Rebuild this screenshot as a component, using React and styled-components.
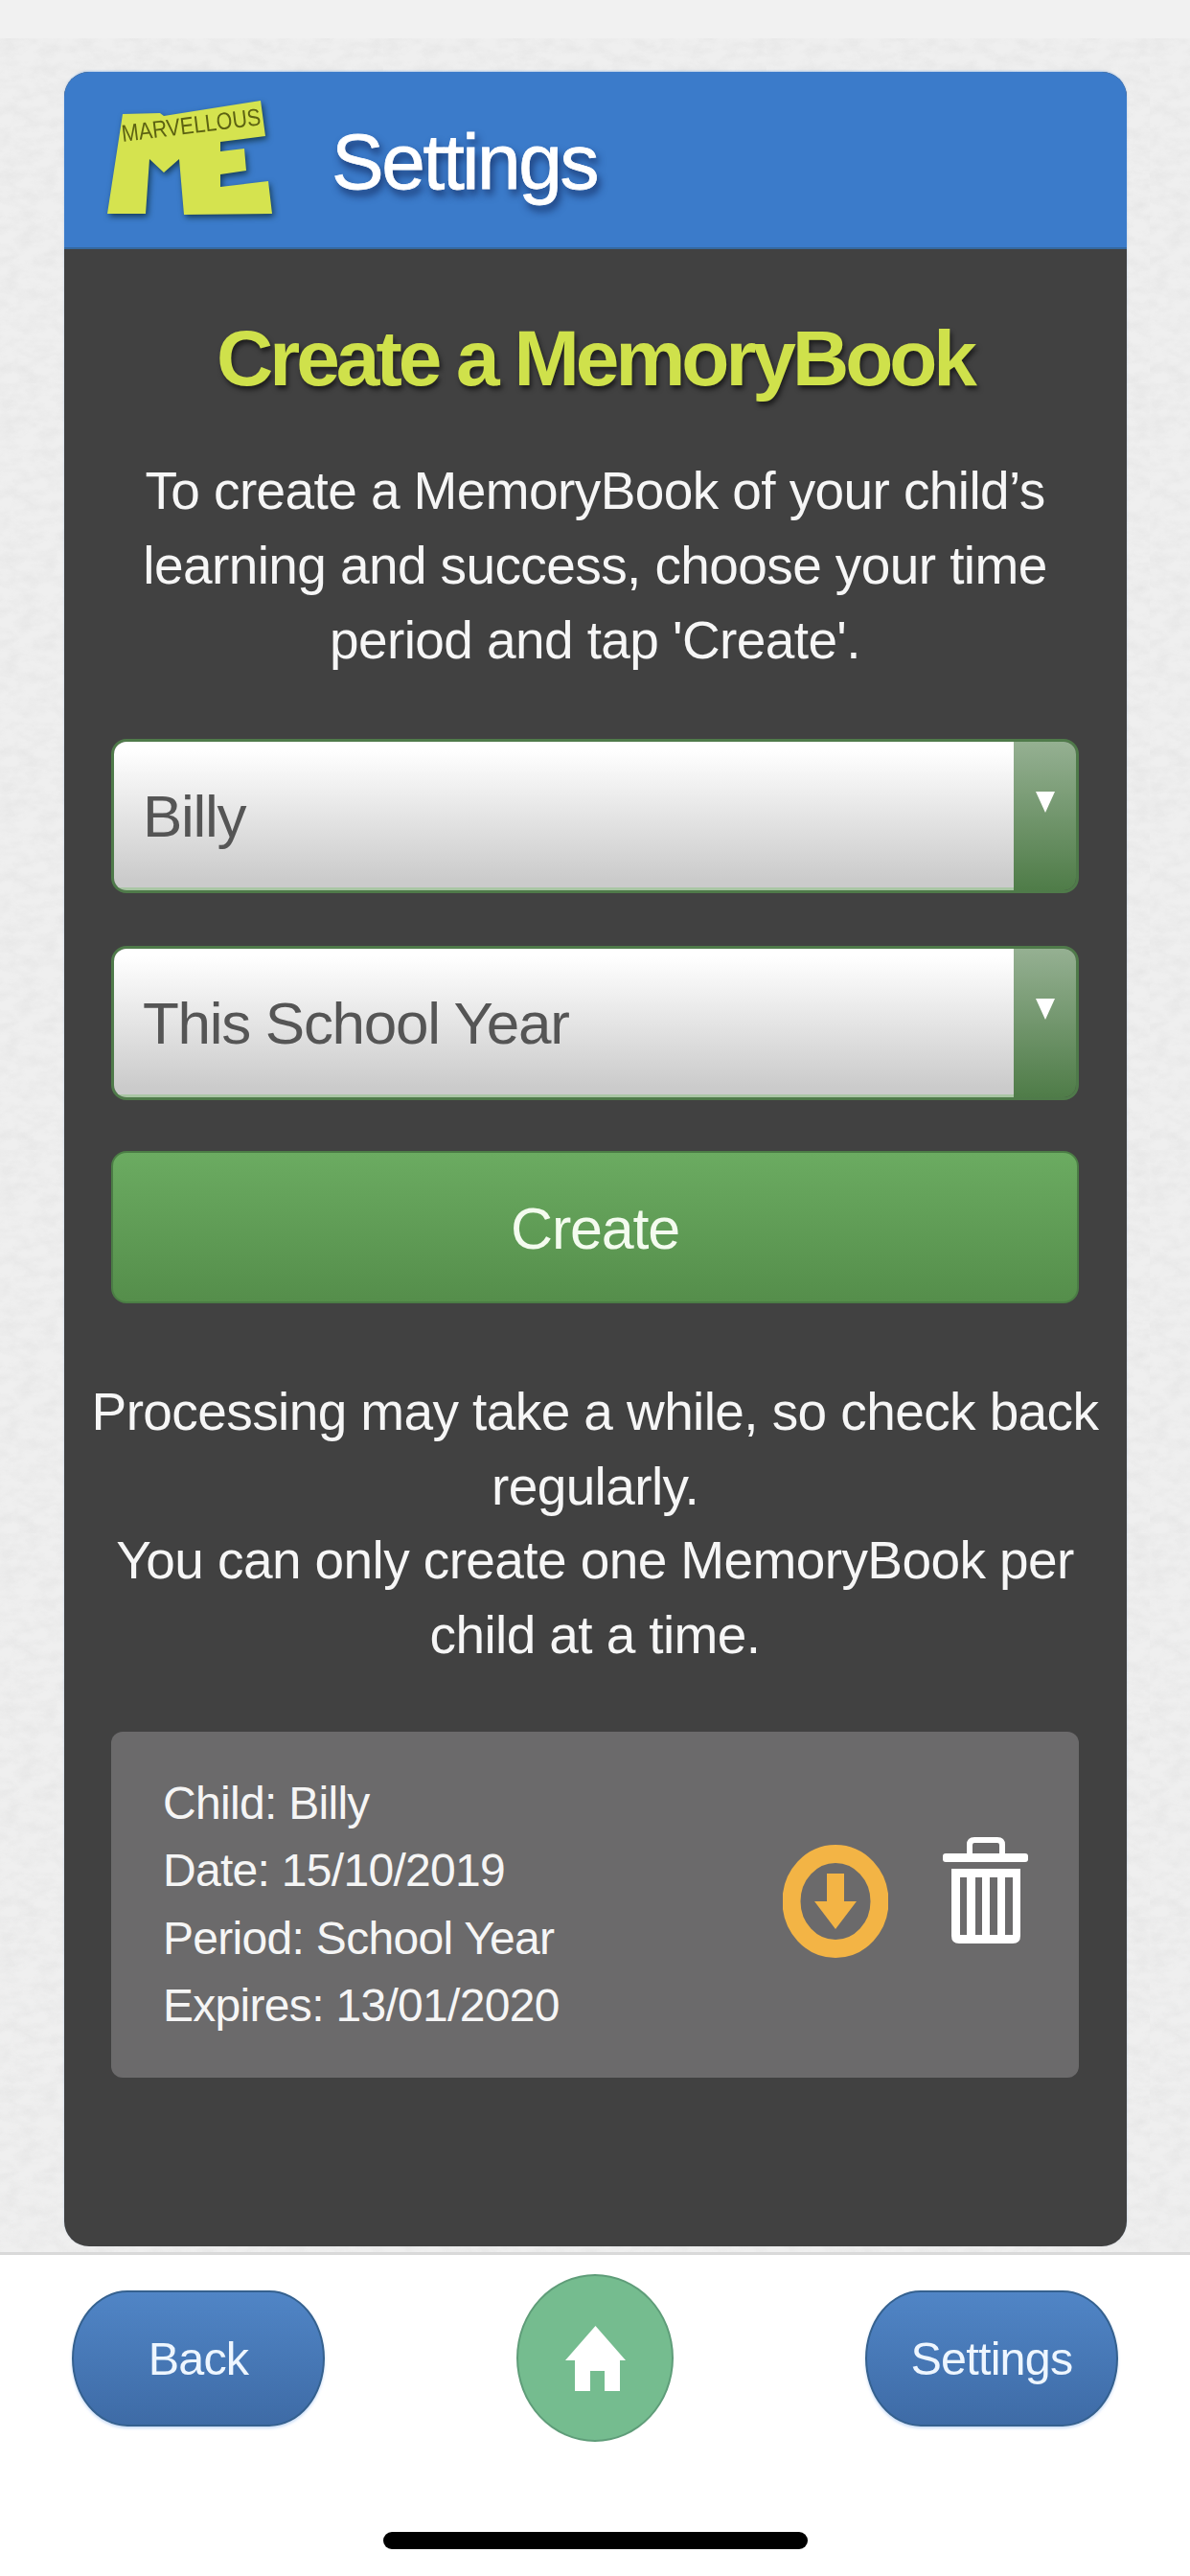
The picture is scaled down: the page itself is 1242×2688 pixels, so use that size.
import React from "react";
import styled, { createGlobalStyle } from "styled-components";

const Global = createGlobalStyle`
  html, body { margin: 0; padding: 0; background: #fff; }
  body { font-family: "Liberation Sans", Arial, sans-serif; }
  * { box-sizing: border-box; }
`;

const paper =
  "data:image/svg+xml," +
  encodeURIComponent(
    `<svg xmlns="http://www.w3.org/2000/svg" width="400" height="400"><filter id="n"><feTurbulence type="fractalNoise" baseFrequency="0.05 0.09" numOctaves="3" stitchTiles="stitch"/><feColorMatrix values="0 0 0 0 0.6 0 0 0 0 0.6 0 0 0 0 0.6 0.4 0 0 0 -0.14"/></filter><rect width="400" height="400" filter="url(#n)"/></svg>`
  );

const Page = styled.div`
  width: 1242px;
  height: 2688px;
  display: flex;
  flex-direction: column;
  overflow: hidden;
`;

const Wall = styled.main`
  height: 2353px;
  padding: 75px 66px 6px 67px;
  background: linear-gradient(#f1f1f1 0 40px, transparent 40px), url("${paper}"), #efefef;
  border-bottom: 3px solid #d9d9d9;
`;

const Card = styled.section`
  height: 100%;
  display: flex;
  flex-direction: column;
  border-radius: 26px;
  overflow: hidden;
  background: #414141;
  box-shadow: 0 -1px 2px rgba(120, 170, 230, 0.5);
`;

const Header = styled.header`
  height: 185px;
  flex: none;
  display: flex;
  align-items: center;
  gap: 26px;
  padding: 0 0 4px 13px;
  background: #3b7bca;
  border-bottom: 2px solid #35689f;
`;

const Logo = styled.svg`
  width: 240px;
  height: 170px;
  flex: none;
  filter: drop-shadow(2px 3px 3px rgba(15, 50, 70, 0.85));
`;

const PageTitle = styled.h1`
  margin: 8px 0 0;
  font-size: 82px;
  line-height: 90px;
  font-weight: 400;
  letter-spacing: -2.4px;
  color: #fff;
  -webkit-text-stroke: 0.8px #fff;
  text-shadow: 3px 6px 9px rgba(15, 35, 85, 0.8);
`;

const Body = styled.div`
  flex: 1;
  display: flex;
  flex-direction: column;
  padding: 62px 50px 0 49px;
`;

const Heading = styled.h2`
  margin: 0 0 47px;
  font-size: 82px;
  line-height: 104px;
  font-weight: 700;
  letter-spacing: -4px;
  text-align: center;
  color: #cfe14b;
  text-shadow: 2px 4px 5px rgba(0, 0, 0, 0.55);
`;

const Copy = styled.p`
  margin: ${(p) => p.$margin || "0 -40px"};
  font-size: 55px;
  line-height: ${(p) => p.$leading || 78}px;
  letter-spacing: -0.6px;
  text-align: center;
  color: #f6f6f6;
  white-space: nowrap;
`;

const Select = styled.div`
  height: 161px;
  margin-top: ${(p) => p.$top}px;
  display: flex;
  border: 3px solid #4f7a4a;
  border-radius: 16px;
  overflow: hidden;
`;

const SelectValue = styled.div`
  flex: 1;
  display: flex;
  align-items: center;
  padding: 2px 0 0 30px;
  font-size: 62px;
  letter-spacing: -1.3px;
  color: #555;
  background: linear-gradient(#ffffff 5%, #cbcbcb 95%);
  border-bottom: 3px solid #a9c6a4;
`;

const SelectArrow = styled.div`
  width: 65px;
  flex: none;
  display: flex;
  justify-content: center;
  padding-top: 52px;
  background: linear-gradient(#95b092, #4f7c48);

  &::before {
    content: "";
    width: 0;
    height: 0;
    border-left: 10px solid transparent;
    border-right: 10px solid transparent;
    border-top: 22px solid #fff;
  }
`;

const CreateButton = styled.button`
  height: 159px;
  margin-top: 53px;
  padding-top: 4px;
  flex: none;
  border: 2px solid #4b7d45;
  border-radius: 16px;
  font-family: inherit;
  font-size: 61px;
  letter-spacing: -1.2px;
  color: #f4fbef;
  background: linear-gradient(#6bab61, #558e4b);
`;

const Download = styled.div`
  height: 361px;
  margin-top: 62px;
  flex: none;
  display: flex;
  align-items: center;
  justify-content: space-between;
  padding: 40px 53px 40px 54px;
  border-radius: 12px;
  background: #6b6a6b;
`;

const Details = styled.div`
  font-size: 48px;
  line-height: 70.5px;
  letter-spacing: -0.7px;
  color: #f5f5f5;
`;

const Actions = styled.div`
  display: flex;
  align-items: flex-start;
  gap: 57px;
  margin-bottom: 16px;
`;

const SaveIcon = styled.svg`
  width: 110px;
  height: 118px;
  margin-top: 8px;
`;

const BinIcon = styled.svg`
  width: 89px;
  height: 112px;
`;

const Footer = styled.footer`
  flex: 1;
  position: relative;
  display: flex;
  justify-content: space-between;
  align-items: flex-start;
  padding: 20px 75px 0;
  background: #fff;
`;

const NavButton = styled.button`
  width: 264px;
  height: 142px;
  margin-top: 17px;
  border: 2px solid #35618f;
  border-radius: 58px / 71px;
  font-family: inherit;
  font-size: 48.5px;
  letter-spacing: -0.8px;
  color: #eef6ff;
  background: linear-gradient(#5085c6, #3e6ba6);
  box-shadow: 0 2px 3px rgba(120, 170, 240, 0.4);
`;

const HomeButton = styled.button`
  width: 164px;
  height: 175px;
  padding: 0;
  display: flex;
  align-items: center;
  justify-content: center;
  border: 2px solid #5f9d79;
  border-radius: 50%;
  background: #75bc8f;
`;

const HomeBar = styled.div`
  position: absolute;
  left: 400px;
  bottom: 28px;
  width: 443px;
  height: 18px;
  border-radius: 9px;
  background: #000;
`;

const App = () => (
  <Page>
    <Global />
    <Wall>
      <Card>
        <Header>
          <Logo viewBox="0 0 240 170">
            <polygon
              fill="#d5e34f"
              points="48,39 87,38 91,41 192,25 197,62 150,68 150,78 175,75 177,98 150,102 150,115 200,109 204,143 112,144 107,86 91,100 76,86 72,143 32,143"
            />
            <text
              x="0"
              y="0"
              transform="translate(48 68) rotate(-7)"
              fontFamily="'Liberation Sans', sans-serif"
              fontSize="25"
              fill="#5c6212"
              textLength="146"
              lengthAdjust="spacingAndGlyphs"
            >
              MARVELLOUS
            </text>
          </Logo>
          <PageTitle>Settings</PageTitle>
        </Header>
        <Body>
          <Heading>Create a MemoryBook</Heading>
          <Copy>
            To create a MemoryBook of your child’s
            <br />
            learning and success, choose your time
            <br />
            period and tap 'Create'.
          </Copy>
          <Select $top={64}>
            <SelectValue>Billy</SelectValue>
            <SelectArrow />
          </Select>
          <Select $top={55}>
            <SelectValue>This School Year</SelectValue>
            <SelectArrow />
          </Select>
          <CreateButton>Create</CreateButton>
          <Copy $margin="75px -40px 0" $leading={77.5}>
            Processing may take a while, so check back
            <br />
            regularly.
            <br />
            You can only create one MemoryBook per
            <br />
            child at a time.
          </Copy>
          <Download>
            <Details>
              Child: Billy
              <br />
              Date: 15/10/2019
              <br />
              Period: School Year
              <br />
              Expires: 13/01/2020
            </Details>
            <Actions>
              <SaveIcon viewBox="0 0 110 118">
                <ellipse cx="55" cy="59" rx="46" ry="49.5" fill="none" stroke="#f3b445" strokeWidth="19" />
                <path d="M46 30H64V59H77L55 88L33 59H46Z" fill="#f3b445" />
              </SaveIcon>
              <BinIcon viewBox="0 0 89 112">
                <path d="M28 17V8Q28 3 33 3H57Q62 3 62 8V17" fill="none" stroke="#fff" strokeWidth="6" />
                <rect x="0" y="17" width="89" height="9" rx="3" fill="#fff" />
                <path
                  fillRule="evenodd"
                  fill="#fff"
                  d="M9 33H81V103Q81 111 73 111H17Q9 111 9 103ZM18 42V102H25V42ZM34 42V102H41V42ZM49 42V102H57V42ZM65 42V102H73V42Z"
                />
              </BinIcon>
            </Actions>
          </Download>
        </Body>
      </Card>
    </Wall>
    <Footer>
      <NavButton>Back</NavButton>
      <HomeButton>
        <svg width="63" height="68" viewBox="0 0 63 68">
          <path d="M31.5 0L63 36H57V68H41V47H26V68H10V36H0Z" fill="#fff" />
        </svg>
      </HomeButton>
      <NavButton>Settings</NavButton>
      <HomeBar />
    </Footer>
  </Page>
);

export default App;
